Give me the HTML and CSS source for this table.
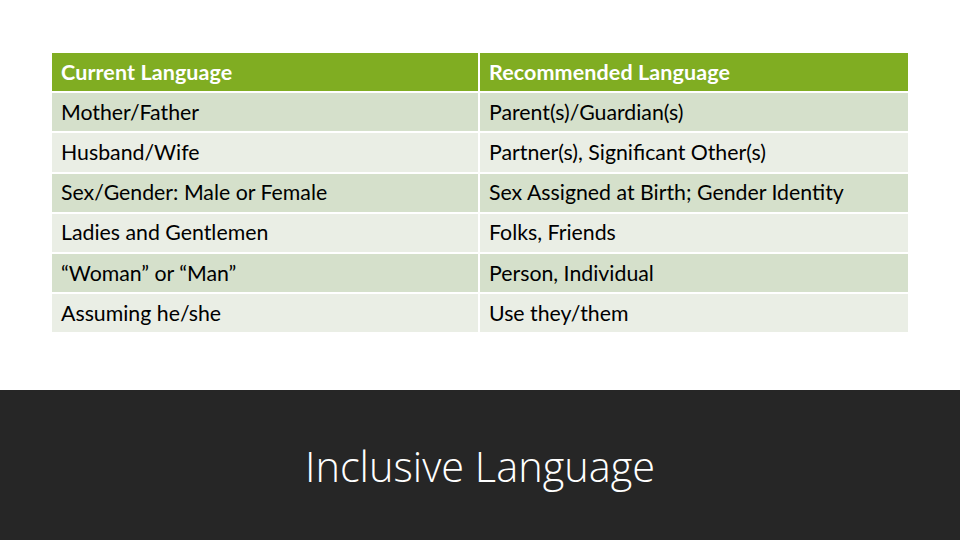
FILE: index.html
```html
<!DOCTYPE html>
<html lang="en">
<head>
<meta charset="utf-8">
<title>Inclusive Language</title>
<link rel="stylesheet" href="styles.css">
</head>
<body>
<main class="slide">
  <section class="table-area">
    <div class="lang-table">
      <div class="cell head">Current Language</div>
      <div class="cell head">Recommended Language</div>
      <div class="cell odd">Mother/Father</div>
      <div class="cell odd">Parent(s)/Guardian(s)</div>
      <div class="cell even">Husband/Wife</div>
      <div class="cell even">Partner(s), Significant Other(s)</div>
      <div class="cell odd">Sex/Gender: Male or Female</div>
      <div class="cell odd">Sex Assigned at Birth; Gender Identity</div>
      <div class="cell even">Ladies and Gentlemen</div>
      <div class="cell even">Folks, Friends</div>
      <div class="cell odd">“Woman” or “Man”</div>
      <div class="cell odd">Person, Individual</div>
      <div class="cell even">Assuming he/she</div>
      <div class="cell even">Use they/them</div>
    </div>
  </section>
  <footer class="title-band">
    <h1 class="title">Inclusive Language</h1>
  </footer>
</main>
</body>
</html>
```
FILE: styles.css
```css
* { box-sizing: border-box; }
html, body { margin: 0; padding: 0; }
body { background: #ffffff; }
.slide {
  width: 960px;
  height: 540px;
  display: flex;
  flex-direction: column;
  overflow: hidden;
}
.table-area {
  height: 390px;
  padding: 53px 52px 0 52px;
}
.lang-table {
  display: grid;
  grid-template-columns: 426px 428px;
  grid-auto-rows: 38.2px;
  gap: 2px;
  width: 856px;
}
.cell {
  display: flex;
  align-items: center;
  padding: 0 9px 1px 9px;
  font-family: "Lato", "Open Sans", sans-serif;
  font-size: 21.3px;
  color: #000000;
}
.head {
  background: #80ad22;
  color: #ffffff;
  font-weight: 700;
  font-size: 21.5px;
  letter-spacing: 0.1px;
}
.odd { background: #d5e0cb; }
.even { background: #eaeee5; }
.title-band {
  flex: 1;
  background: #262626;
  display: flex;
  align-items: center;
  justify-content: center;
}
.title {
  margin: 0;
  font-family: "Open Sans", sans-serif;
  font-weight: 300;
  font-size: 41.5px;
  color: #ffffff;
  padding-top: 2px;
}
```
